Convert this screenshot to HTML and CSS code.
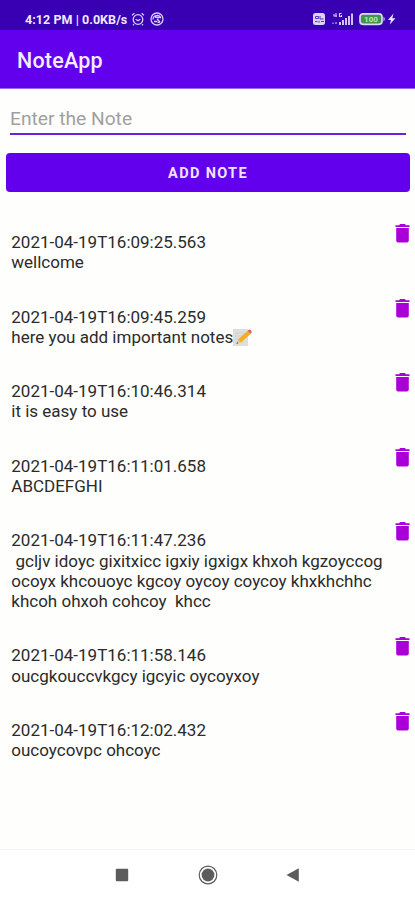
FILE: index.html
```html
<!DOCTYPE html>
<html lang="en">
<head>
<meta charset="utf-8">
<title>NoteApp</title>
<link rel="stylesheet" href="styles.css">
</head>
<body>
<svg width="0" height="0" class="defs">
  <symbol id="trash" viewBox="0 0 15 20"><path d="M0.5 2.2H4.2L5 1h5l0.8 1.2h3.7v1.7h-14zM1.2 5h12.6v12.4a2 2 0 0 1-2 2H3.2a2 2 0 0 1-2-2z"/></symbol>
</svg>
<div class="status">
  <span class="clock">4:12 PM | 0.0KB/s</span>
  <svg class="alarm" width="14" height="14" viewBox="0 0 14 14"><circle cx="7" cy="7.5" r="4.8"/><path d="M1 3.2L3.4 1.2M13 3.2L10.6 1.2M4.7 7.2L7 8.8l2.3-1.6M3 12.2l-1 1M11 12.2l1 1"/></svg>
  <svg class="dial" width="14" height="14" viewBox="0 0 14 14"><circle cx="7" cy="7" r="6"/><path d="M3 7.5a4 4 0 0 1 7.8-1.2M4 9.5h3.2M7 7l3 3M5 5l4.5.8M7.5 10.5l2.5-.5"/></svg>
  <span class="grow"></span>
  <svg width="86" height="16" viewBox="0 0 86 16">
    <rect x="1" y="2" width="12" height="12" rx="2.5" fill="#dcd2fb"/>
    <path d="M3.5 5.5h3v2h-3zM8 5v3h3.5M3 10.5h2.5M7 9.8v2M9 10.5h3" fill="none" stroke="#5a35c4"/>
    <path d="M22 3v2h3M24 2v4M29.5 2.5h-2v3h2V4M21 13v-1.5M24 13v-2" fill="none" stroke="#d4c8f7" stroke-width="1.1"/>
    <path d="M27 11h2v3h-2zM30 9h2v5h-2zM33 7h2v7h-2zM36 5h2v9h-2zM39 2.5h2V14h-2z" fill="#cfc2f7"/>
    <rect x="48" y="2.8" width="22" height="10.5" rx="3" fill="#41934f" stroke="#e0d8fa" stroke-width="1.7"/>
    <path d="M71.5 5.5q2.5 2.5 0 5z" fill="#e0d8fa"/>
    <text x="59" y="11" text-anchor="middle" class="charge">100</text>
    <path d="M81.5 2.5L76 9h3L77.7 13.5 83.5 7.2h-3.2z" fill="#eee8ff"/>
  </svg>
</div>
<header class="bar">NoteApp</header>
<main>
  <input class="entry" type="text" placeholder="Enter the Note">
  <button class="add">ADD NOTE</button>
  <ul class="notes">
    <li><p>2021-04-19T16:09:25.563
wellcome</p><svg class="trash"><use href="#trash"/></svg></li>
    <li><p>2021-04-19T16:09:45.259
here you add important notes<svg class="memo" viewBox="0 0 21 19"><path d="M1 1h15v17H1z" fill="#dededc"/><path d="M3 5h10M3 8h8M3 11h6M3 14h9" stroke="#d2d2d0"/><path d="M6 11.5L15.5 3l3 3L9 14.5z" fill="#f5ad24"/><path d="M6 11.5L4.6 15.8 9 14.5z" fill="#e5c594"/><path d="M5.2 14L4.4 16l2-.7z" fill="#555"/><path d="M15.5 3l1-1q1.3-1 2.5.2t.4 2.8l-.9 1z" fill="#e66060"/></svg></p><svg class="trash"><use href="#trash"/></svg></li>
    <li><p>2021-04-19T16:10:46.314
it is easy to use</p><svg class="trash"><use href="#trash"/></svg></li>
    <li><p>2021-04-19T16:11:01.658
ABCDEFGHI</p><svg class="trash"><use href="#trash"/></svg></li>
    <li><p>2021-04-19T16:11:47.236
 gcljv idoyc gixitxicc igxiy igxigx khxoh kgzoyccog
ocoyx khcouoyc kgcoy oycoy coycoy khxkhchhc
khcoh ohxoh cohcoy  khcc</p><svg class="trash"><use href="#trash"/></svg></li>
    <li><p>2021-04-19T16:11:58.146
oucgkouccvkgcy igcyic oycoyxoy</p><svg class="trash"><use href="#trash"/></svg></li>
    <li><p>2021-04-19T16:12:02.432
oucoycovpc ohcoyc</p><svg class="trash"><use href="#trash"/></svg></li>
  </ul>
</main>
<nav class="nav">
  <svg width="20" height="20" viewBox="0 0 20 20"><rect x="3.8" y="3.7" width="12.4" height="12.6" rx="1"/></svg>
  <svg width="20" height="20" viewBox="0 0 20 20"><circle cx="10" cy="10" r="6.4"/><circle cx="10" cy="10" r="8.8" fill="none" stroke="#5c5c5c" stroke-width="1.2"/></svg>
  <svg width="20" height="20" viewBox="0 0 20 20"><path d="M3.5 10L15.8 3.3v13.4z"/></svg>
</nav>
</body>
</html>
```

FILE: styles.css
```css
* { box-sizing: border-box; }
body {
  margin: 0;
  height: 900px;
  display: flex;
  flex-direction: column;
  overflow: hidden;
  background: #fefefd;
  font-family: Roboto, sans-serif;
}
.defs { position: absolute; }
.status {
  height: 30px;
  padding: 8px 17px 0 25px;
  display: flex;
  align-items: center;
  background: #3900b3;
  color: #efeaff;
}
.clock { font-size: 12.5px; font-weight: 700; letter-spacing: 0.05px; white-space: nowrap; width: 106px; }
.alarm, .dial { fill: none; stroke: #d8ccfa; stroke-width: 1.3; }
.dial { margin-left: 5px; }
.grow { flex: 1; }
.charge { font: 700 8px Roboto, sans-serif; fill: #b4ecb0; }
.bar {
  height: 59px;
  padding: 3px 17px 0;
  display: flex;
  align-items: center;
  background: #6200ee;
  color: #f3ecff;
  font-size: 21.5px;
  font-weight: 500;
  letter-spacing: 0.2px;
  border-bottom: 1px solid #9b66ee;
}
main { flex: 1; display: flex; flex-direction: column; }
.entry {
  margin: 14px 9px 0 10px;
  height: 32px;
  padding: 0;
  border: 0;
  border-bottom: 2px solid #6a24d8;
  background: none;
  outline: 0;
  font: 19.2px Roboto, sans-serif;
}
.entry::placeholder { color: #a0a0a0; opacity: 1; }
.add {
  margin: 18px 5px 0 6px;
  height: 39px;
  padding: 2px 0 0;
  border: 0;
  border-radius: 4px;
  background: #6200ee;
  color: #eee4ff;
  font: 700 14.5px Roboto, sans-serif;
  letter-spacing: 1.35px;
}
.notes { list-style: none; margin: 22.5px 0 0; padding: 0; }
.notes li {
  display: flex;
  justify-content: space-between;
  align-items: flex-start;
  padding: 8.5px 5px 8.5px 11.3px;
}
.notes p {
  margin: 9.1px 0 0;
  padding-bottom: 8.1px;
  font-size: 17px;
  line-height: 20.2px;
  white-space: pre;
  color: #2b2b2b;
}
.trash { width: 15px; height: 20px; flex: none; fill: #aa00d8; }
.memo { width: 21px; height: 19px; margin: -2px 0 -3px -1.5px; vertical-align: -1px; }
.nav {
  height: 51px;
  padding: 0 112px;
  display: flex;
  justify-content: space-between;
  align-items: center;
  border-top: 1px solid #f3f3f3;
  background: #fff;
  fill: #5c5c5c;
}
```
